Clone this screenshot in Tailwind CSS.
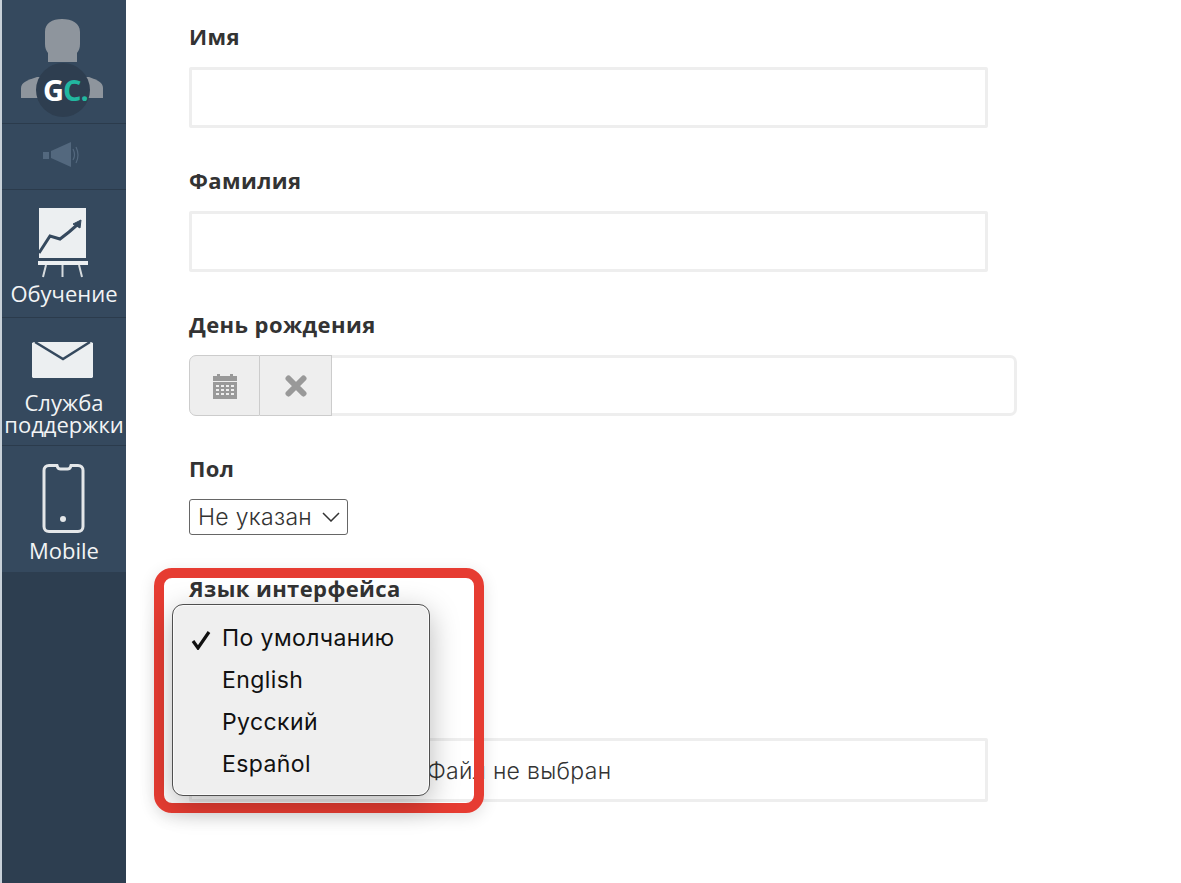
<!DOCTYPE html>
<html lang="ru">
<head>
<meta charset="utf-8">
<script src="https://cdn.jsdelivr.net/npm/@tailwindcss/browser@4"></script>
</head>
<body class="bg-white">
<div class="relative flex w-[1181px] h-[883px] overflow-hidden font-['Inter','Noto_Sans',sans-serif] text-[#333]">
  <aside class="w-[126px] h-full shrink-0 flex flex-col bg-[#2d3e50] border-l-2 border-[#c8d1d9] font-['Open_Sans',sans-serif] text-[22px] leading-[22px] font-medium text-[#f2f4f5] text-center">
    <div class="relative h-[124px] bg-[#35495e] border-b border-[#2b3b4c]">
      <svg class="absolute left-[-2px] top-0" width="126" height="123" viewBox="0 0 126 123">
        <path d="M45 32c0-9 7-13 17-13s18 4 18 13v12c0 4-1 6-3 9v9H48v-9c-2-3-3-5-3-9z" fill="#8e959d"/>
        <path d="M21 98V88c0-5 6-8 16-11h52c9 3 14 6 14 11v10z" fill="#8e959d"/>
        <circle cx="63" cy="90" r="27" fill="#2e3e50"/>
      </svg>
      <div class="absolute left-[41px] top-[73px] font-['Open_Sans',sans-serif] font-bold text-[29px] leading-[34px] tracking-[-1px] whitespace-nowrap"><span class="text-white">G</span><span class="text-[#22b8a0]">C.</span></div>
    </div>
    <div class="relative h-[66px] bg-[#35495e] border-b border-[#2b3b4c]">
      <svg class="absolute left-[-2px] top-[-124px]" width="126" height="190" viewBox="0 0 126 190">
        <g fill="#53687e"><rect x="43" y="152" width="6" height="7"/><path d="M51 151l20-9v25l-20-9z"/></g>
        <g fill="none" stroke="#53687e" stroke-width="1.2"><path d="M73 149q3 6 0 11"/><path d="M76 147q4 8 0 16"/></g>
      </svg>
    </div>
    <div class="relative h-[128px] bg-[#35495e] border-b border-[#2b3b4c] flex flex-col items-center justify-end pb-[13px]">
      <svg class="absolute left-[-2px] top-[-190px]" width="126" height="290" viewBox="0 0 126 290">
        <rect x="39" y="208" width="47" height="50" fill="#eceff1"/>
        <path d="M39 253l11-17 10 3 9-7 8-7" fill="none" stroke="#35495e" stroke-width="3"/>
        <path d="M73 224l8-4-1 8z" fill="#35495e" stroke="#35495e" stroke-width="1"/>
        <rect x="38" y="261" width="50" height="4" fill="#eceff1"/>
        <path d="M46 265l-3 12M62.500 265v12M79 265l3 12" stroke="#d5dadd" stroke-width="2" fill="none"/>
      </svg>
      <span class="relative">Обучение</span>
    </div>
    <div class="relative h-[128px] bg-[#35495e] border-b border-[#2b3b4c] flex flex-col items-center justify-end pb-[10px]">
      <svg class="absolute left-[-2px] top-[-318px]" width="126" height="400" viewBox="0 0 126 400">
        <path d="M32 343l2-1h57l2 1v34l-1 1H33l-1-1z" fill="#eceff1"/>
        <path d="M35 342l28 17 27-17" fill="none" stroke="#35495e" stroke-width="2.500"/>
      </svg>
      <span class="relative">Служба<br><span class="whitespace-nowrap">поддержки</span></span>
    </div>
    <div class="relative h-[126px] bg-[#35495e] flex flex-col items-center justify-end pb-[11px]">
      <svg class="absolute left-[-2px] top-[-446px]" width="126" height="540" viewBox="0 0 126 540">
        <path d="M49 465.500h8l.5 1.500c.5 1.500 1.500 2 3 2h7c1.500 0 2.500-.5 3-2l.5-1.500h7c3 0 5 2 5 5v56c0 3-2 5-5 5H49c-3 0-5-2-5-5v-56c0-3 2-5 5-5z" fill="none" stroke="#e4e7e9" stroke-width="3"/>
        <circle cx="63" cy="519" r="3" fill="#e4e7e9"/>
      </svg>
      <span class="relative">Mobile</span>
    </div>
  </aside>

  <main class="pl-[63px] pt-[25px] flex-1 font-['Inter',sans-serif]">
    <label class="block h-[26px] text-[22px] leading-[22px] tracking-[0.4px] font-['Open_Sans',sans-serif] font-bold">Имя</label>
    <div class="mt-[16px] mb-[41px] w-[799px] h-[61px] border-[3px] border-[#eeeeee] rounded-[2px]"></div>

    <label class="block h-[26px] text-[22px] leading-[22px] tracking-[0.4px] font-['Open_Sans',sans-serif] font-bold">Фамилия</label>
    <div class="mt-[16px] mb-[41px] w-[799px] h-[61px] border-[3px] border-[#eeeeee] rounded-[2px]"></div>

    <label class="block h-[26px] text-[22px] leading-[22px] tracking-[0.4px] font-['Open_Sans',sans-serif] font-bold">День рождения</label>
    <div class="mt-[16px] mb-[41px] w-[828px] h-[61px] flex">
      <div class="w-[71px] h-full flex items-center justify-center bg-[#eeeeee] border border-[#cccccc] rounded-l-[7px]">
        <svg width="24" height="26" viewBox="0 0 24 26"><path fill="#999" d="M0 3h4V1h3v2h10V1h3v2h4v5H0z"/><path fill="#999" fill-rule="evenodd" d="M0 9h24v17H0zM3 12v2h3v-2zm5 0v2h3v-2zm5 0v2h3v-2zm5 0v2h3v-2zM3 16v2h3v-2zm5 0v2h3v-2zm5 0v2h3v-2zm5 0v2h3v-2zM3 20v2h3v-2zm5 0v2h3v-2zm5 0v2h3v-2zm5 0v2h3v-2z"/></svg>
      </div>
      <div class="w-[72px] h-full flex items-center justify-center bg-[#eeeeee] border border-l-0 border-[#cccccc]">
        <svg width="22" height="22" viewBox="0 0 22 22"><path d="M3.500 3.500l15 15M18.500 3.500l-15 15" stroke="#999" stroke-width="6" stroke-linecap="round"/></svg>
      </div>
      <div class="flex-1 h-full border-[3px] border-l-0 border-[#eeeeee] rounded-r-[7px]"></div>
    </div>

    <label class="block h-[26px] text-[22px] leading-[22px] tracking-[0.4px] font-['Open_Sans',sans-serif] font-bold">Пол</label>
    <div class="mt-[16px] mb-[42px] w-[159px] h-[36px] flex items-center justify-between pl-[8px] pr-[7px] border border-[#666] rounded-[3px] text-[23px] tracking-[0.3px] font-light">
      <span>Не указан</span>
      <svg width="18" height="10" viewBox="0 0 18 10"><path d="M1 1l8 8 8-8" fill="none" stroke="#333" stroke-width="1.500"/></svg>
    </div>

    <label class="block h-[26px] text-[22px] leading-[22px] tracking-[0.4px] font-['Open_Sans',sans-serif] font-bold whitespace-nowrap">Язык интерфейса</label>
    <div class="mt-[135px] w-[799px] h-[64px] border-[3px] border-[#eeeeee] rounded-[2px] flex items-center pl-[235px] pt-[2px] text-[23px] tracking-[0.3px] font-light">Файл не выбран</div>
  </main>

  <div class="absolute left-[154px] top-[568px] w-[330px] h-[245px] border-[10px] border-[#e63c32] rounded-[18px] shadow-[0_4px_16px_rgba(0,0,0,0.12)]"></div>

  <div class="absolute left-[172px] top-[604px] w-[258px] h-[192px] bg-[#efefef] border border-[#4f4f4f] rounded-[11px] shadow-[0_8px_30px_rgba(0,0,0,0.28)] ring-1 ring-inset ring-white/70 pt-[12px] text-[23px] leading-[42px] tracking-[0.4px] text-[#111] font-['Inter',sans-serif]">
    <div class="relative pl-[49px] whitespace-nowrap">
      <svg class="absolute left-[18px] top-[13px]" width="20" height="20" viewBox="0 0 20 20"><path d="M2 11l5 7L18 2" fill="none" stroke="#111" stroke-width="3.200"/></svg>
      По умолчанию
    </div>
    <div class="pl-[49px]">English</div>
    <div class="pl-[49px]">Русский</div>
    <div class="pl-[49px]">Español</div>
  </div>
</div>
</body>
</html>
